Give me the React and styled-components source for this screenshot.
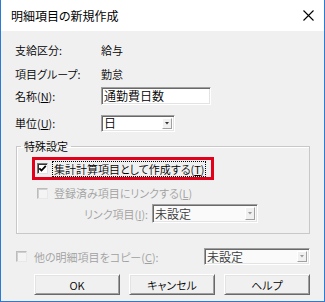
import React from "react";
import styled, { createGlobalStyle } from "styled-components";

const Global = createGlobalStyle`
  html, body { margin: 0; padding: 0; background: #fff; }
  body { font-family: "Noto Sans CJK JP", "Noto Sans", sans-serif; }
`;

const Frame = styled.div`
  box-sizing: border-box;
  width: 325px;
  height: 302px;
  border: 1px solid #2b7bd4;
  border-top: none;
  background: #f0f0f0;
  display: flex;
  flex-direction: column;
  overflow: hidden;
  font-family: "Noto Sans CJK JP", sans-serif;
  font-feature-settings: "palt";
  font-weight: 350;
  font-size: 11px;
  color: #000;
`;

const TitleBar = styled.div`
  height: 31px;
  flex: none;
  background: #fff;
  display: flex;
  align-items: center;
  justify-content: space-between;
  padding: 0 10px 0 10px;
`;

const Title = styled.span`
  font-size: 12px;
  font-weight: 400;
  line-height: 14px;
  color: #000;
`;

const Client = styled.div`
  flex: 1;
  display: flex;
  flex-direction: column;
  padding: 7px 14px 0 14px;
`;

const InfoGrid = styled.div`
  display: grid;
  grid-template-columns: 86px auto;
  grid-auto-rows: 24px;
  align-items: center;
`;

const FieldRow = styled.div`
  display: grid;
  grid-template-columns: 86px auto;
  align-items: center;
  height: ${(p) => p.$h}px;
  margin-top: ${(p) => p.$mt || 0}px;
`;

const Label = styled.span`
  line-height: 14px;
  white-space: nowrap;
  color: ${(p) => (p.$disabled ? "#a0a0a0" : "#000")};
`;

const Sunken = styled.div`
  box-sizing: border-box;
  width: ${(p) => p.$w}px;
  height: ${(p) => p.$h}px;
  background: ${(p) => (p.$disabled ? "#fafafa" : "#fff")};
  border: 1px solid;
  border-color: #a0a0a0 #fff #fff #a0a0a0;
  box-shadow: inset 1px 1px 0 #696969, inset -1px -1px 0 #e3e3e3;
  display: flex;
  align-items: center;
  padding-left: 2px;
  line-height: 14px;
  color: ${(p) => (p.$disabled ? "#3a3a3a" : "#000")};
  font-size: 12px;
`;

const SelText = styled.span`
  flex: 1;
  white-space: nowrap;
`;

const DropBtn = styled.div`
  box-sizing: border-box;
  width: 10px;
  height: calc(100% - 4px);
  margin-right: 2px;
  background: #f0f0f0;
  border: 1px solid;
  border-color: #fff #a0a0a0 #a0a0a0 #fff;
  display: flex;
  align-items: center;
  justify-content: center;
`;

const Fieldset = styled.fieldset`
  margin: 7px 0 0 1px;
  padding: 0 0 10px 0;
  border: 1px solid #c8c8c8;
  box-shadow: inset 1px 1px 0 #fff;
  min-width: 0;
`;

const Legend = styled.legend`
  margin-left: 4px;
  padding: 0 3px;
  line-height: 14px;
  font-size: 11px;
`;

const Highlight = styled.div`
  box-sizing: border-box;
  width: 182px;
  height: 23px;
  margin: 4px 0 0 15px;
  border: 3px solid #e2001a;
  display: flex;
  align-items: center;
  padding-left: 2px;
`;

const CheckRow = styled.div`
  display: flex;
  align-items: center;
  height: ${(p) => p.$h || 18}px;
  margin: ${(p) => p.$mt || 0}px 0 0 ${(p) => p.$ml || 0}px;
`;

const Box = styled.div`
  box-sizing: border-box;
  flex: none;
  width: 11px;
  height: 11px;
  background: ${(p) => (p.$disabled ? "#f4f4f4" : "#fff")};
  border: 1px solid;
  border-color: ${(p) =>
    p.$disabled ? "#bcbcbc #e8e8e8 #e8e8e8 #bcbcbc" : "#7a7a7a #e3e3e3 #e3e3e3 #7a7a7a"};
  box-shadow: ${(p) =>
    p.$disabled ? "inset 1px 1px 0 #d0d0d0" : "inset 1px 1px 0 #333"};
  display: flex;
  align-items: center;
  justify-content: center;
  margin-right: ${(p) => p.$gap}px;
`;

const CheckText = styled.span`
  line-height: 14px;
  white-space: nowrap;
  color: ${(p) => (p.$disabled ? "#a0a0a0" : "#000")};
  outline: ${(p) => (p.$focus ? "1px dotted #000" : "none")};
  padding: 0 1px;
`;

const LinkRow = styled.div`
  display: flex;
  align-items: center;
  gap: 4px;
  margin-top: 2px;
  height: 19px;
`;

const RightLabel = styled.span`
  width: 131px;
  text-align: right;
  line-height: 14px;
  color: #a0a0a0;
  white-space: nowrap;
`;

const CopyRow = styled.div`
  display: flex;
  align-items: center;
  margin: 14px 0 0 1px;
  height: 17px;
`;

const Spacer = styled.div`
  flex: 1;
`;

const ButtonRow = styled.div`
  display: flex;
  justify-content: flex-end;
  gap: 9px;
  margin-top: 9px;
`;

const Button = styled.button`
  box-sizing: border-box;
  width: 86px;
  height: 21px;
  padding: 0;
  background: #f0f0f0;
  border: 1px solid;
  border-color: #fff #696969 #696969 #fff;
  box-shadow: inset 1px 1px 0 #e3e3e3, inset -1px -1px 0 #a0a0a0;
  font-family: "Noto Sans CJK JP", sans-serif;
  font-feature-settings: "palt";
  font-weight: 350;
  font-size: 11px;
  line-height: 14px;
  color: #000;
`;

const Arrow = ({ disabled }) => (
  <svg width="4" height="3" viewBox="0 0 4 3">
    <path d="M0 0H4L2 2.5Z" fill={disabled ? "#9a9a9a" : "#333"} />
  </svg>
);

const Check = () => (
  <svg width="9" height="9" viewBox="0 0 9 9">
    <path d="M1.3 4.3L3.5 6.5L7.8 1.8" fill="none" stroke="#000" strokeWidth="1.8" />
  </svg>
);

const Close = () => (
  <svg width="11" height="11" viewBox="0 0 11 11">
    <path d="M0.5 0.5L10.5 10.5M10.5 0.5L0.5 10.5" stroke="#000" strokeWidth="1.1" />
  </svg>
);

const Select = ({ w, h, text, disabled }) => (
  <Sunken $w={w} $h={h} $disabled={disabled}>
    <SelText>{text}</SelText>
    <DropBtn>
      <Arrow disabled={disabled} />
    </DropBtn>
  </Sunken>
);

export default function App() {
  return (
    <>
      <Global />
      <Frame>
        <TitleBar>
          <Title>明細項目の新規作成</Title>
          <Close />
        </TitleBar>
        <Client>
          <InfoGrid>
            <Label>支給区分:</Label>
            <Label>給与</Label>
            <Label>項目グループ:</Label>
            <Label>勤怠</Label>
          </InfoGrid>
          <FieldRow $h={20}>
            <Label>
              名称(<u>N</u>):
            </Label>
            <Sunken $w={110} $h={18}>
              通勤費日数
            </Sunken>
          </FieldRow>
          <FieldRow $h={18} $mt={8}>
            <Label>
              単位(<u>U</u>):
            </Label>
            <Select w={74} h={17} text="日" />
          </FieldRow>

          <Fieldset>
            <Legend>特殊設定</Legend>
            <Highlight>
              <Box $gap={5}>
                <Check />
              </Box>
              <CheckText $focus>
                集計計算項目として作成する(<u>T</u>)
              </CheckText>
            </Highlight>
            <CheckRow $mt={4} $ml={20}>
              <Box $gap={5} $disabled />
              <CheckText $disabled>
                登録済み項目にリンクする(<u>L</u>)
              </CheckText>
            </CheckRow>
            <LinkRow>
              <RightLabel>
                リンク項目(<u>I</u>):
              </RightLabel>
              <Select w={106} h={19} text="未設定" disabled />
            </LinkRow>
          </Fieldset>

          <CopyRow>
            <Box $gap={6} $disabled />
            <CheckText $disabled>
              他の明細項目をコピー(<u>C</u>):
            </CheckText>
            <Spacer />
            <Select w={106} h={17} text="未設定" disabled />
          </CopyRow>

          <ButtonRow>
            <Button>OK</Button>
            <Button>キャンセル</Button>
            <Button>ヘルプ</Button>
          </ButtonRow>
        </Client>
      </Frame>
    </>
  );
}
